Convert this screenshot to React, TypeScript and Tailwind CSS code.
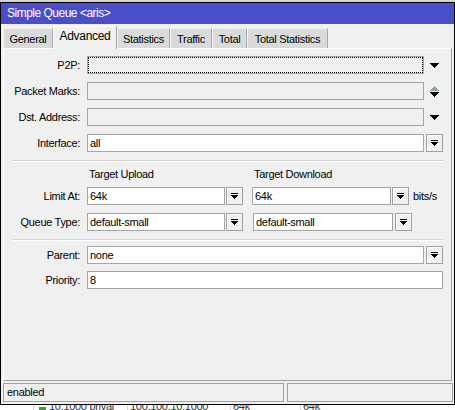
import React, { ReactNode } from 'react';

// pixel triangle, pointing down, rows of width w, w-2, ...
function Tri({ w, color = '#000', up = false }: { w: number; color?: string; up?: boolean }) {
  const rows = Math.ceil(w / 2);
  const rects = [];
  for (let i = 0; i < rows; i++) {
    const y = up ? rows - 1 - i : i;
    rects.push(<rect key={i} x={i} y={y} width={w - 2 * i} height={1} fill={color} />);
  }
  return (
    <svg width={w} height={rows} viewBox={`0 0 ${w} ${rows}`} shapeRendering="crispEdges">
      {rects}
    </svg>
  );
}

function DropButton() {
  return (
    <div className="flex h-[18px] w-[17px] shrink-0 flex-col items-center justify-center border border-[#a0a0a0] bg-[#f0f0f0] shadow-[inset_1px_1px_0_#ffffff]">
      <svg width="7" height="6" viewBox="0 0 7 6" shapeRendering="crispEdges">
        <rect x="0" y="0" width="7" height="1" fill="#000" />
        <rect x="0" y="2" width="7" height="1" fill="#000" />
        <rect x="1" y="3" width="5" height="1" fill="#000" />
        <rect x="2" y="4" width="3" height="1" fill="#000" />
        <rect x="3" y="5" width="1" height="1" fill="#000" />
      </svg>
    </div>
  );
}

function Field({
  width,
  value,
  disabled = false,
  focused = false,
}: {
  width: string;
  value?: string;
  disabled?: boolean;
  focused?: boolean;
}) {
  return (
    <div
      className={`h-[18px] shrink-0 border border-[#a5a5a5] ${width} ${disabled ? 'bg-[#f0f0f0]' : 'bg-white'}`}
    >
      {focused ? (
        <div className="h-full w-full border border-dotted border-black" />
      ) : (
        <div className="pl-[2px] leading-[16px] text-black">{value}</div>
      )}
    </div>
  );
}

function Row({ label, children, className = '' }: { label: string; children: ReactNode; className?: string }) {
  return (
    <div className={`flex h-[18px] items-center ${className}`}>
      <div className="w-[76px] shrink-0 text-right text-black">{label}</div>
      <div className="ml-[7px] flex items-center">{children}</div>
    </div>
  );
}

function Separator({ className = '' }: { className?: string }) {
  return <div className={`ml-[8px] h-[2px] w-[431px] border-t border-b border-t-[#d2d2d2] border-b-white ${className}`} />;
}

const tabs = [
  { name: 'General', w: 'w-[50px]' },
  { name: 'Advanced', w: 'w-[64px]', active: true },
  { name: 'Statistics', w: 'w-[53px]' },
  { name: 'Traffic', w: 'w-[42px]' },
  { name: 'Total', w: 'w-[35px]' },
  { name: 'Total Statistics', w: 'w-[81px]' },
];

export default function App() {
  return (
    <div className="h-[410px] w-[455px] overflow-hidden bg-white font-['Liberation_Sans',Arial,sans-serif] text-[11px] tracking-[-0.3px]">
      <div className="h-[2px] bg-[#d6d6d6]" />
      <div className="flex h-[403px] flex-col border border-black bg-[#f0f0f0]">
        {/* title bar */}
        <div className="h-[21px] shrink-0 bg-[#4b4ec9] pl-[6px] leading-[20px] text-[12px] text-white tracking-[-0.5px]">
          Simple Queue &lt;aris&gt;
        </div>

        {/* tabs */}
        <div className="flex h-[24px] shrink-0 items-end pl-[2px]">
          {tabs.map((t) =>
            t.active ? (
              <div
                key={t.name}
                className={`relative z-10 -mb-[1px] h-[23px] ${t.w} border-t border-l border-r border-t-white border-l-white border-r-[#a0a0a0] bg-[#f0f0f0] pt-[2px] text-center leading-[14px] text-[12px] text-black`}
              >
                {t.name}
              </div>
            ) : (
              <div
                key={t.name}
                className={`h-[20px] ${t.w} border-t border-l border-r border-t-[#f4f4f4] border-l-[#f4f4f4] border-r-[#a8a8a8] bg-[#dadada] pt-[3px] text-center leading-[14px] text-black`}
              >
                {t.name}
              </div>
            ),
          )}
        </div>

        {/* panel */}
        <div className="ml-[2px] flex h-[333px] w-[449px] shrink-0 flex-col border border-t-white border-l-white border-r-[#a0a0a0] border-b-[#a0a0a0] pt-[7px]">
          <Row label="P2P:">
            <Field width="w-[337px]" disabled focused />
            <div className="ml-[6px]">
              <Tri w={9} />
            </div>
          </Row>
          <Row label="Packet Marks:" className="mt-[8px]">
            <Field width="w-[337px]" disabled />
            <div className="ml-[6px] flex flex-col items-center gap-[1px]">
              <Tri w={9} color="#93a993" up />
              <Tri w={9} />
            </div>
          </Row>
          <Row label="Dst. Address:" className="mt-[8px]">
            <Field width="w-[337px]" disabled />
            <div className="ml-[6px]">
              <Tri w={9} />
            </div>
          </Row>
          <Row label="Interface:" className="mt-[8px]">
            <Field width="w-[337px]" value="all" />
            <div className="ml-[2px]">
              <DropButton />
            </div>
          </Row>

          <Separator className="mt-[8px]" />

          <div className="mt-[6px] flex h-[13px] leading-[13px] text-black">
            <div className="ml-[85px] w-[165px]">Target Upload</div>
            <div>Target Download</div>
          </div>

          <Row label="Limit At:" className="mt-[6px]">
            <Field width="w-[138px]" value="64k" />
            <div className="ml-[1px]">
              <DropButton />
            </div>
            <div className="ml-[9px]">
              <Field width="w-[139px]" value="64k" />
            </div>
            <div className="ml-[1px]">
              <DropButton />
            </div>
            <div className="ml-[4px] text-black">bits/s</div>
          </Row>
          <Row label="Queue Type:" className="mt-[8px]">
            <Field width="w-[138px]" value="default-small" />
            <div className="ml-[1px]">
              <DropButton />
            </div>
            <div className="ml-[10px]">
              <Field width="w-[140px]" value="default-small" />
            </div>
            <div className="ml-[2px]">
              <DropButton />
            </div>
          </Row>

          <Separator className="mt-[8px]" />

          <Row label="Parent:" className="mt-[5px]">
            <Field width="w-[337px]" value="none" />
            <div className="ml-[2px]">
              <DropButton />
            </div>
          </Row>
          <Row label="Priority:" className="mt-[7px]">
            <Field width="w-[356px]" value="8" />
          </Row>
        </div>

        {/* status bar */}
        <div className="ml-[2px] mt-[2px] flex h-[19px] shrink-0 gap-[3px]">
          <div className="h-full w-[281px] border border-[#a0a0a0] pl-[3px] leading-[17px] text-black">enabled</div>
          <div className="h-full w-[166px] border border-[#a0a0a0]" />
        </div>
      </div>

      {/* list behind the window */}
      <div className="relative h-[5px] overflow-hidden bg-white">
        <div className="absolute left-[33px] top-0 h-[5px] w-[1px] bg-[#d8d8d8]" />
        <div className="absolute left-[39px] top-[2px] h-[4px] w-[7px] bg-[#22b022]" />
        <div className="absolute left-[49px] -top-[7px] text-[#333]">10.1000 prival</div>
        <div className="absolute left-[127px] top-0 h-[5px] w-[1px] bg-[#d8d8d8]" />
        <div className="absolute left-[130px] -top-[7px] text-[#333]">100.100.10.1000</div>
        <div className="absolute left-[230px] top-0 h-[5px] w-[1px] bg-[#d8d8d8]" />
        <div className="absolute left-[233px] -top-[7px] text-[#333]">64k</div>
        <div className="absolute left-[300px] top-0 h-[5px] w-[1px] bg-[#d8d8d8]" />
        <div className="absolute left-[303px] -top-[7px] text-[#333]">64k</div>
      </div>
    </div>
  );
}
